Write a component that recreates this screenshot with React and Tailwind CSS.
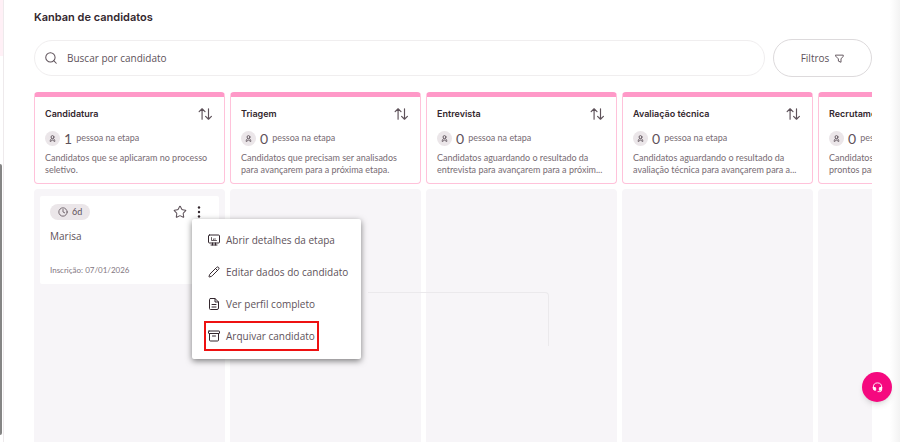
import { Clock, Pencil, Search, Star } from 'lucide-react'

const STAGES = [
  {
    title: 'Candidatura',
    description: 'Candidatos que se aplicaram no processo seletivo.',
    candidates: [{ name: 'Marisa', age: '6d', date: '07/01/2026' }],
  },
  {
    title: 'Triagem',
    description: 'Candidatos que precisam ser analisados para avançarem para a próxima etapa.',
    candidates: [],
  },
  {
    title: 'Entrevista',
    description: 'Candidatos aguardando o resultado da entrevista para avançarem para a próxim...',
    candidates: [],
  },
  {
    title: 'Avaliação técnica',
    description: 'Candidatos aguardando o resultado da avaliação técnica para avançarem para a...',
    candidates: [],
  },
  {
    title: 'Recrutamento',
    description: 'Candidatos que foram selecionados e prontos para a contratação.',
    candidates: [],
  },
]

const MENU = [
  { label: 'Abrir detalhes da etapa', icon: MonitorIcon },
  { label: 'Editar dados do candidato', icon: Pencil },
  { label: 'Ver perfil completo', icon: DocumentIcon },
  { label: 'Arquivar candidato', icon: ArchiveIcon, highlighted: true },
]

function Icon({ children, className }) {
  return (
    <svg
      viewBox="0 0 24 24"
      fill="none"
      stroke="currentColor"
      strokeWidth="2"
      strokeLinecap="round"
      strokeLinejoin="round"
      className={className}
      aria-hidden="true"
    >
      {children}
    </svg>
  )
}

function MonitorIcon({ className }) {
  return (
    <Icon className={className}>
      <rect x="1" y="2" width="22" height="16" rx="2" />
      <path d="M9 18v4M15 18v4M6 22h12" />
      <path d="M7 7v6h10M11 10v1M14 9v2" strokeWidth="1.500" />
    </Icon>
  )
}

function DocumentIcon({ className }) {
  return (
    <Icon className={className}>
      <path d="M5 1h9l7 7v12a3 3 0 0 1-3 3H5a2 2 0 0 1-2-2V3a2 2 0 0 1 2-2z" />
      <path d="M14 1v7h7M8 13h8M8 18h8" />
    </Icon>
  )
}

function ArchiveIcon({ className }) {
  return (
    <Icon className={className}>
      <rect x="1" y="2" width="22" height="5" rx="1" />
      <path d="M3 7v13a2 2 0 0 0 2 2h14a2 2 0 0 0 2-2V7M9 12h6" />
    </Icon>
  )
}

function PersonIcon({ className }) {
  return (
    <Icon className={className}>
      <g strokeWidth="3">
        <circle cx="12" cy="7" r="5" />
        <path d="M9 12c-3 2-5 5-5 10l4-1 4-5 4 5 4 1c0-5-2-8-5-10" />
      </g>
    </Icon>
  )
}

function FunnelIcon({ className }) {
  return (
    <Icon className={className}>
      <path d="M2 3h20v3l-6 7v9l-7-3v-6L2 6z" strokeWidth="2.500" />
    </Icon>
  )
}

function SortIcon({ className }) {
  return (
    <Icon className={className}>
      <path d="M7 21V3M2 8l5-5 5 5M18 3v18M13 16l5 5 5-5" />
    </Icon>
  )
}

function DotsIcon({ className }) {
  return (
    <svg viewBox="0 0 12 12" fill="currentColor" className={className} aria-hidden="true">
      <circle cx="6" cy="1.500" r="1.200" />
      <circle cx="6" cy="6" r="1.200" />
      <circle cx="6" cy="10.500" r="1.200" />
    </svg>
  )
}

function HeadsetIcon({ className }) {
  return (
    <Icon className={className}>
      <path d="M3 14v-3a9 9 0 0 1 18 0v6a4 4 0 0 1-4 4h-4" />
      <path d="M3 12h4a1 1 0 0 1 1 1v5H6a3 3 0 0 1-3-3zM21 12h-4a1 1 0 0 0-1 1v5h2a3 3 0 0 0 3-3z" fill="currentColor" />
    </Icon>
  )
}

function CandidateMenu() {
  return (
    <ul className="absolute top-[23px] left-[152px] z-10 w-[169px] rounded-xs bg-white px-3 pt-[5px] pb-[7px] shadow-[0_2px_6px_rgba(0,0,0,0.5)]">
      {MENU.map(({ label, icon: ItemIcon, highlighted }) => (
        <li key={label} className="flex h-8 items-center">
          <button
            className={`flex h-[30px] items-center gap-1.5 border-2 pr-0.5 pl-0.5 font-['Open_Sans'] text-[10px] whitespace-nowrap ${
              highlighted ? 'border-[#ee1111]' : 'border-transparent'
            }`}
          >
            <ItemIcon className="size-3 shrink-0 text-[#33272e]" />
            {label}
          </button>
        </li>
      ))}
    </ul>
  )
}

function CandidateCard({ name, age, date }) {
  return (
    <article className="relative mx-1.5 mt-[7px] rounded-xs bg-white px-2.5 pt-2 pb-2">
      <div className="flex items-center justify-between">
        <span className="flex h-4 items-center gap-1 rounded-full bg-[#ebe6e9] px-2 text-[9px]">
          <Clock className="size-[10px]" />
          {age}
        </span>
        <div className="flex items-center gap-1.5 pr-1">
          <button aria-label="Favoritar">
            <Star className="size-3.5" strokeWidth={1.75} />
          </button>
          <button aria-label="Mais opções">
            <DotsIcon className="size-3 text-[#33272e]" />
          </button>
        </div>
      </div>
      <p className="mt-2 font-['Open_Sans'] text-[10px] leading-4">{name}</p>
      <p className="mt-5 text-[8px] leading-3 text-[#83777f]">Inscrição: {date}</p>
      <CandidateMenu />
    </article>
  )
}

function Stage({ title, description, candidates }) {
  return (
    <section className="flex w-[191px] shrink-0 flex-col gap-[5px]">
      <header className="h-[92px] rounded-sm border border-t-[5px] border-[#ffc2da] border-t-[#ff99c8] bg-white px-2.5 pt-[9px]">
        <div className="flex h-4 items-center justify-between">
          <h2 className="font-['Inter'] text-[9px] font-semibold whitespace-nowrap text-[#33272e]">{title}</h2>
          <button aria-label={`Ordenar ${title}`} className="pr-0.5">
            <SortIcon className="size-3.5" />
          </button>
        </div>
        <div className="mt-[7px] flex h-[18px] items-center gap-1 whitespace-nowrap">
          <span className="flex size-[15px] items-center justify-center rounded-full bg-[#ebe6e9]">
            <PersonIcon className="size-[7px]" />
          </span>
          <span className="text-[14px]">{candidates.length}</span>
          <span className="text-[9px] text-[#776b73]">pessoa na etapa</span>
        </div>
        <p className="mt-[5px] text-[9px] leading-3 text-[#776b73]">{description}</p>
      </header>
      <div className="flex-1 rounded-t-sm bg-[#f7f5f8]">
        {candidates.map((candidate) => (
          <CandidateCard key={candidate.name} {...candidate} />
        ))}
      </div>
    </section>
  )
}

export default function App() {
  return (
    <div className="relative flex h-screen overflow-hidden bg-white font-['Lato',sans-serif] text-[#5e525a]">
      {/* Sidebar edge */}
      <aside className="flex w-1 shrink-0 flex-col border-r border-[#eeeaec]">
        <div className="h-14 bg-[#fff0f6]" />
        <div className="mt-[108px] mb-[7px] w-0.5 flex-1 rounded-r-xs bg-[#858585]" />
      </aside>

      <main className="flex min-w-0 flex-1 flex-col pr-7 pl-[30px]">
        <h1 className="mt-2 font-['Inter'] text-[11px] leading-[18px] font-semibold text-[#33272e]">Kanban de candidatos</h1>

        <div className="mt-[13px] flex items-center gap-2">
          <label className="flex h-9 flex-1 items-center gap-[9px] rounded-full border border-[#f0eeef] px-[9px]">
            <Search className="size-3.5" strokeWidth={1.75} />
            <input
              type="search"
              aria-label="Buscar por candidato"
              placeholder="Buscar por candidato"
              className="min-w-0 flex-1 font-['Open_Sans'] text-[10px] outline-none placeholder:text-[#5e525a]"
            />
          </label>
          <button className="flex h-[38px] w-[99px] items-center justify-center gap-1.5 rounded-full border border-[#dddadc] font-['Open_Sans'] text-[10px]">
            Filtros
            <FunnelIcon className="size-[9px]" />
          </button>
        </div>

        {/* Board */}
        <div className="relative mt-[15px] flex min-h-0 flex-1 gap-[5px] overflow-hidden">
          {STAGES.map((stage) => (
            <Stage key={stage.title} {...stage} />
          ))}
          <div className="absolute top-[200px] left-[334px] h-[54px] w-[181px] rounded-tr-sm border-t border-r border-[#ebe9ec]" />
        </div>
      </main>

      <div className="absolute inset-y-0 right-0 w-2.5 bg-linear-to-r from-white to-[#f3f3f3]" />

      <button
        aria-label="Suporte"
        className="absolute right-2 bottom-10 flex size-[30px] items-center justify-center rounded-full bg-[#f5097f] text-white shadow-md"
      >
        <HeadsetIcon className="size-[11px]" />
      </button>
    </div>
  )
}
